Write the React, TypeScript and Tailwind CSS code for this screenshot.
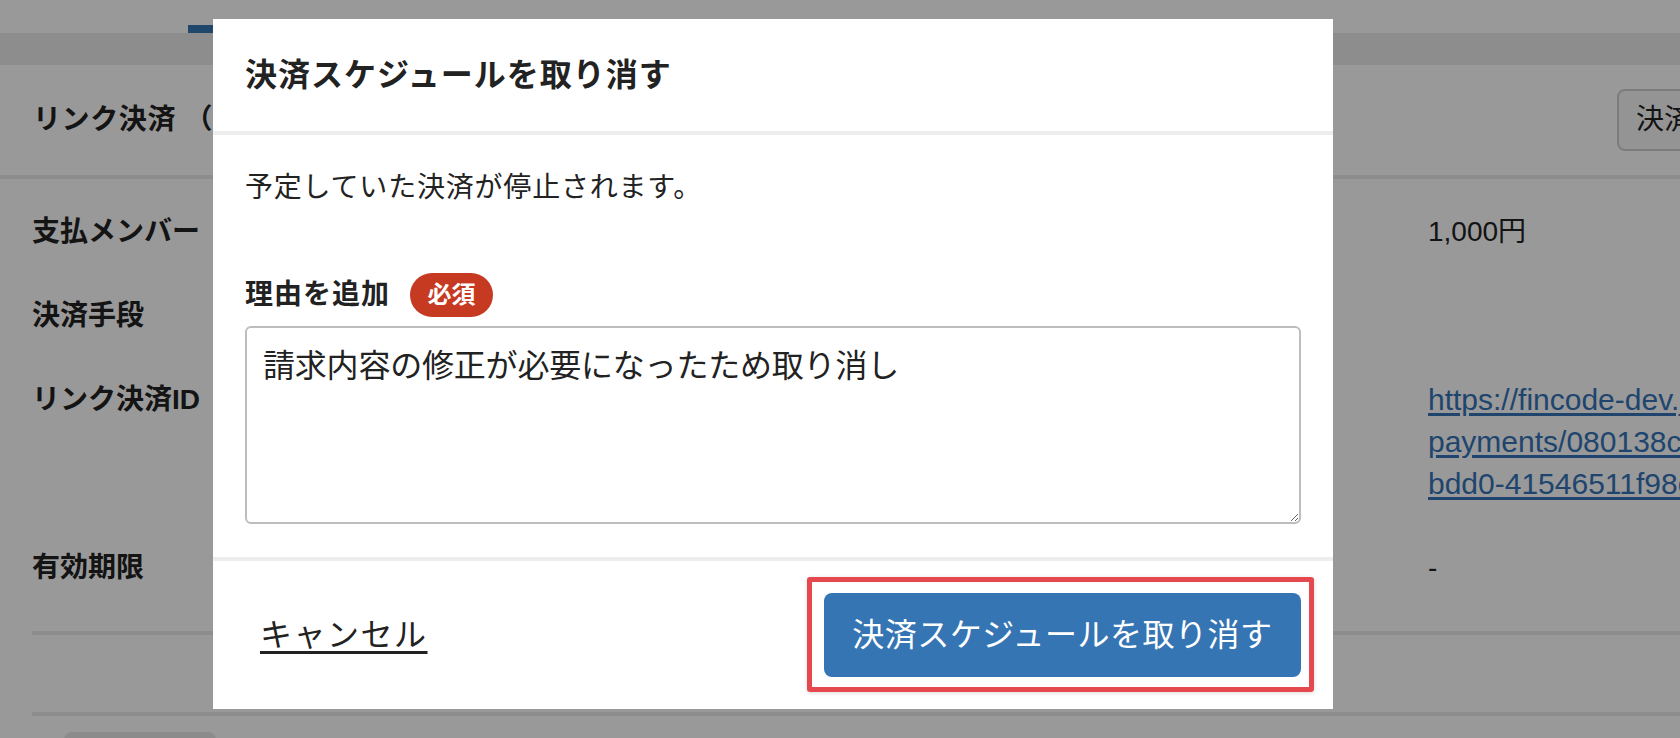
import React from "react";

const font = "font-['Liberation_Sans','Noto_Sans_CJK_JP',sans-serif]";

function DetailRow(props: { label: string; children?: React.ReactNode }) {
  return (
    <div className="grid grid-cols-[1396px_auto] py-[21px] text-[28px] leading-[42px] text-[#222]">
      <div className="font-bold">{props.label}</div>
      <div className="whitespace-nowrap">{props.children}</div>
    </div>
  );
}

function CancelScheduleModal() {
  return (
    <div className="w-[1120px] bg-white">
      <div className="px-8 py-8 border-b-4 border-[#ededed]">
        <h2 className="text-[32px] leading-[48px] font-bold tracking-[1px] text-[#222]">
          決済スケジュールを取り消す
        </h2>
      </div>
      <div className="px-8 pt-8 pb-[33px]">
        <p className="text-[28px] leading-[42px] tracking-[0.8px] text-[#222]">
          予定していた決済が停止されます。
        </p>
        <div className="mt-16 flex h-[44px] items-center gap-5">
          <label className="text-[28px] leading-[42px] font-bold tracking-[1px] text-[#222]">
            理由を追加
          </label>
          <span className="flex h-[44px] w-[83px] items-center justify-center rounded-full bg-[#c73a22] text-[24px] font-bold text-white">
            必須
          </span>
        </div>
        <textarea
          className="mt-[9px] block h-[198px] w-full resize-y rounded-md border-2 border-[#bdbdbd] px-4 pt-[14px] pb-4 text-[32px] leading-[48px] tracking-[-0.2px] text-[#222] outline-none"
          defaultValue="請求内容の修正が必要になったため取り消し"
        />
      </div>
      <div className="flex items-center justify-between border-t-4 border-[#ededed] px-8 py-8">
        <button className="pl-[15px] text-[32px] leading-[48px] tracking-[1.5px] text-[#222] underline decoration-[3px] underline-offset-[5px]">
          キャンセル
        </button>
        <div className="relative">
          <button className="h-[84px] w-[477px] rounded-lg bg-[#3575b3] text-[32px] tracking-[0.5px] text-white">
            決済スケジュールを取り消す
          </button>
          <span className="absolute -left-[17px] -top-[16px] -right-[13px] -bottom-[15px] rounded-[3px] border-[5px] border-[#e5484d] shadow-[0_1px_4px_rgba(0,0,0,0.15)]" />
        </div>
      </div>
    </div>
  );
}

export default function App() {
  return (
    <div className={`relative h-[738px] w-full overflow-hidden bg-white ${font}`}>
      {/* page behind the dialog */}
      <div className="flex h-[33px] pl-[188px]">
        <div className="w-[150px] border-b-8 border-[#3575b3]" />
      </div>
      <div className="h-8 bg-[#ececec]" />
      <div className="flex h-[114px] items-center border-b-4 border-[#ececec] pl-[33px]">
        <h1 className="w-[1584px] shrink-0 text-[28px] font-bold tracking-[0.6px] text-[#222]">
          リンク決済 （定期）
        </h1>
        <button className="h-[62px] shrink-0 rounded-lg border-2 border-[#cfcfcf] bg-[#f7f7f7] px-[17px] text-[28px] text-[#222]">
          決済スケジュールを取り消す
        </button>
      </div>
      <div className="pl-8">
        <div className="border-b-4 border-[#ececec] pt-[11px] pb-[21px]">
          <DetailRow label="支払メンバー">1,000円</DetailRow>
          <DetailRow label="決済手段" />
          <DetailRow label="リンク決済ID">
            <a className="text-[30px] leading-[42px] text-[#3474b8] underline underline-offset-[3px]">
              <span className="block">https://fincode-dev.jp/link/</span>
              <span className="block">payments/080138c9-52a1-4f2e-</span>
              <span className="block">bdd0-41546511f98e</span>
            </a>
          </DetailRow>
          <DetailRow label="有効期限">-</DetailRow>
        </div>
        <div className="h-[81px] border-b-4 border-[#ececec]" />
        <div className="ml-8 mt-4 h-[60px] w-[152px] rounded-lg bg-[#e8e8e8]" />
      </div>

      {/* overlay + dialog */}
      <div className="absolute inset-0 bg-black/40">
        <div className="pl-[213px] pt-[19px]">
          <CancelScheduleModal />
        </div>
      </div>
    </div>
  );
}
